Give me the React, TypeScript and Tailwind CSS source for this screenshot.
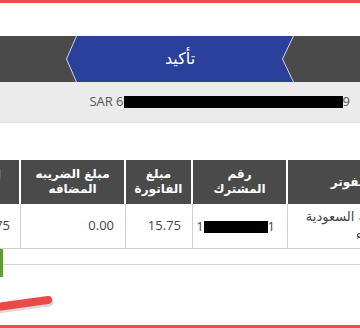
import React from 'react';

const arabic = "font-['DejaVu_Sans','Noto_Sans',sans-serif]";

function StepBar() {
  return (
    <div className="h-[46px] bg-[#4a4a4a] flex justify-center">
      <div className="relative w-[228px] h-full flex items-center justify-center">
        <svg className="absolute inset-0" width="228" height="46" viewBox="0 0 228 46">
          <polygon points="10,0 228,0 217,23 228,46 10,46 0,23" fill="#2a409a" />
          <polyline points="10.5,0 0.5,23 10.5,46" fill="none" stroke="#d8d8d8" strokeWidth="1" />
          <polyline points="227.5,0 216.5,23 227.5,46" fill="none" stroke="#d8d8d8" strokeWidth="1" />
        </svg>
        <span dir="rtl" className={`relative text-white text-[16px] ${arabic}`}>تأكيد</span>
      </div>
    </div>
  );
}

const cols = [
  { w: 'w-[80px]', head: ['إجمالي', 'المبلغ'] },
  { w: 'w-[105px]', head: ['مبلغ الضريبه', 'المضافه'] },
  { w: 'w-[67px]', head: ['مبلغ', 'الفاتورة'] },
  { w: 'w-[95px]', head: ['رقم', 'المشترك'] },
  { w: 'w-[160px]', head: ['اسم المفوتر'] },
];

function BillTable() {
  return (
    <div className="overflow-hidden">
      <div className="w-max ml-[-59px]">
        <div className="flex h-[44px] bg-[#4a4a4a]">
          {cols.map((c, i) => (
            <div
              key={i}
              dir="rtl"
              className={`${c.w} flex flex-col items-center justify-center text-white font-bold text-[12px] leading-[15px] ${i < cols.length - 1 ? 'border-r-2 border-white' : ''} ${arabic}`}
            >
              {c.head.map((h) => (
                <span key={h}>{h}</span>
              ))}
            </div>
          ))}
        </div>
        <div className="flex h-[45px] border-b border-[#cfcfcf] text-[13px] text-[#444]">
          <div className="w-[80px] border-r border-[#cfcfcf] flex items-center justify-end pr-[10px]">15.75</div>
          <div className="w-[105px] border-r border-[#cfcfcf] flex items-center justify-end pr-[11px]">0.00</div>
          <div className="w-[67px] border-r border-[#cfcfcf] flex items-center justify-end pr-[11px]">15.75</div>
          <div className="w-[95px] border-r border-[#cfcfcf] flex items-center justify-end pr-[12px] pt-[2px]">
            <span>1</span>
            <span className="inline-block w-[64px] h-[12px] bg-black" />
            <span>1</span>
          </div>
          <div dir="rtl" className={`w-[160px] flex flex-col justify-center items-start pr-[50px] text-[13px] leading-[18px] ${arabic}`}>
            <span className="whitespace-nowrap">الشركة السعودية</span>
            <span className="whitespace-nowrap">للكهرباء</span>
          </div>
        </div>
      </div>
    </div>
  );
}

export default function App() {
  return (
    <div className="w-[360px] h-[328px] overflow-hidden bg-white flex flex-col font-['Open_Sans','DejaVu_Sans',sans-serif]">
      <div className="h-[3px] bg-[#ee4b4b]" />
      <div className="h-[33px]" />
      <StepBar />
      <div className="h-[41px] bg-[#ebebeb] border-b border-[#dddddd] flex items-center justify-end pr-[10px] text-[13px] text-[#555]">
        <span>SAR 6</span>
        <span className="inline-block w-[219px] h-[12px] bg-black" />
        <span>9</span>
      </div>
      <div className="h-[37px]" />
      <BillTable />
      <div className="relative flex-1">
        <div className="flex">
          <div className="w-[3px] h-[28px] bg-[#5c9e2e]" />
          <div className="flex-1 h-[16px] border-b border-[#d6d6d6]" />
        </div>
        <svg className="absolute left-0 top-[40px]" width="70" height="30" viewBox="0 0 70 30">
          <line x1="-10" y1="19" x2="48" y2="11" stroke="#999" strokeOpacity="0.35" strokeWidth="9" strokeLinecap="round" transform="translate(1,2)" />
          <line x1="-10" y1="19" x2="48" y2="11" stroke="#e84a4a" strokeWidth="8" strokeLinecap="round" />
        </svg>
      </div>
      <div className="h-[3px] bg-[#ee4b4b]" />
    </div>
  );
}
